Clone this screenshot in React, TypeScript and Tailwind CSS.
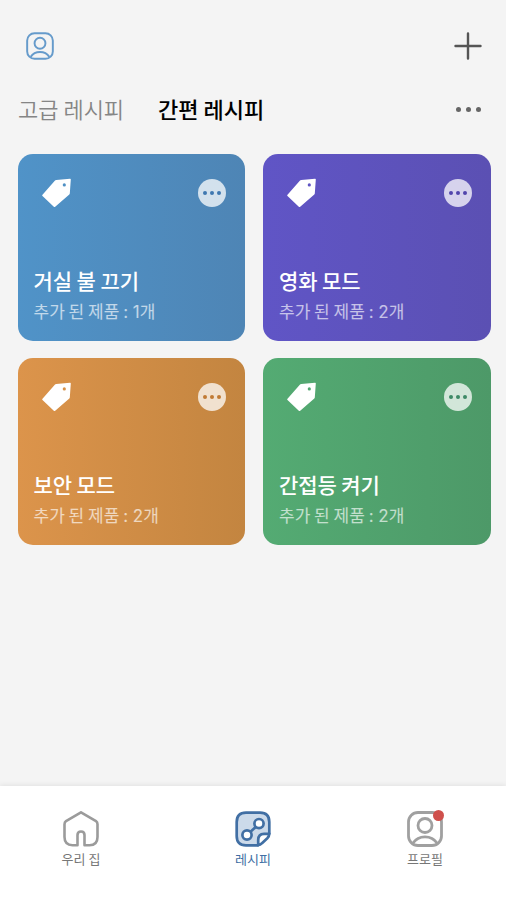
import React from 'react';

interface Recipe {
  title: string;
  count: number;
  gradient: string;
  dots: string;
}

const recipes: Recipe[] = [
  { title: '거실 불 끄기', count: 1, gradient: 'from-[#5093c8] to-[#4e85b5]', dots: 'text-[#3f78b0]' },
  { title: '영화 모드', count: 2, gradient: 'from-[#6055c6] to-[#5b50b3]', dots: 'text-[#5145ac]' },
  { title: '보안 모드', count: 2, gradient: 'from-[#dc944b] to-[#c38540]', dots: 'text-[#c17a34]' },
  { title: '간접등 켜기', count: 2, gradient: 'from-[#54ab73] to-[#4d9968]', dots: 'text-[#3d8a66]' },
];

const ProfileIcon: React.FC<{ className: string; strokeWidth: number }> = ({ className, strokeWidth }) => (
  <svg viewBox="0 0 36 36" fill="none" stroke="currentColor" strokeWidth={strokeWidth} className={className}>
    <rect x="1.5" y="1.5" width="33" height="33" rx="9.5" />
    <circle cx="18" cy="14.5" r="7" />
    <path d="M6 32C9 27.5 13 25.8 18 25.8s9 1.7 12 6.2" />
  </svg>
);

const HomeIcon = () => (
  <svg viewBox="0 0 36 36" fill="none" stroke="currentColor" strokeWidth="2.6" strokeLinejoin="round" className="size-9">
    <path d="M18 1.3 33 10.2Q34.5 11.2 34.5 13.2V26Q34.5 34.2 26.5 34.2H21.5V24Q21.5 20.5 18 20.5T14.5 24V34.2H9.5Q1.5 34.2 1.5 26V13.2Q1.5 11.2 3 10.2Z" />
  </svg>
);

const RecipeIcon = () => (
  <svg viewBox="0 0 36 36" fill="none" stroke="currentColor" strokeWidth="2.7" strokeLinejoin="round" className="size-9">
    <path d="M11 1.7H25Q34.3 1.7 34.3 11V22.5L23 34.3H11Q1.7 34.3 1.7 25V11Q1.7 1.7 11 1.7Z" fill="#ccdaea" />
    <path d="M34.3 22.8H29Q23.2 22.8 23.2 29V34.2Q25.3 34.2 27 32.2L32.3 27.2Q34.3 25.2 34.3 22.8Z" fill="white" />
    <path d="m15.5 20.8 5.5-5" />
    <circle cx="12" cy="24" r="4.6" fill="white" />
    <circle cx="24" cy="12.6" r="4.6" fill="white" />
  </svg>
);

const TagIcon = () => (
  <svg viewBox="0 0 30 30" className="size-[30px] text-white">
    <path
      fill="currentColor"
      fillRule="evenodd"
      d="M14.2 2 28 .8Q28.9.7 28.8 1.6L27.8 15.4Q27.7 16 27.3 16.5L13.2 28.8Q12.4 29.4 11.8 28.7L.5 18Q-.1 17.4.5 16.7L12.8 2.8Q13.4 2.1 14.2 2ZM22.3 5.3a1.6 1.6 0 1 0 0 3.2 1.6 1.6 0 0 0 0-3.2Z"
    />
  </svg>
);

const RecipeCard: React.FC<{ recipe: Recipe }> = ({ recipe }) => (
  <div className={`flex h-[187px] flex-col justify-between rounded-[15px] bg-gradient-to-r pt-6 pr-[19px] pb-4 pl-4 ${recipe.gradient}`}>
    <div className="flex items-start justify-between pl-2">
      <TagIcon />
      <button className={`mt-px flex size-7 items-center justify-center gap-[3px] rounded-full bg-white/75 ${recipe.dots}`}>
        <span className="size-1 rounded-full bg-current" />
        <span className="size-1 rounded-full bg-current" />
        <span className="size-1 rounded-full bg-current" />
      </button>
    </div>
    <div className="whitespace-nowrap">
      <h2 className="text-[21px] leading-[30px] font-medium tracking-[-0.1px] text-white">{recipe.title}</h2>
      <p className="mt-[3px] text-[17px] leading-[26px] text-white/65">
        추가 된 제품 <span className="font-['Inter','Noto_Sans_CJK_KR',sans-serif]">: {recipe.count}</span>개
      </p>
    </div>
  </div>
);

export default function App() {
  return (
    <div className="flex h-[900px] w-[506px] flex-col overflow-hidden bg-[#f4f4f4] font-['Noto_Sans_CJK_KR',sans-serif]">
      <header className="flex items-center justify-between pt-8 pr-6 pl-[25.5px]">
        <ProfileIcon className="size-7 text-[#669bcb]" strokeWidth={2.5} />
        <svg viewBox="0 0 28 28" className="size-7 text-[#555]" stroke="currentColor" strokeWidth="2.4" strokeLinecap="round">
          <path d="M14 1.5v25M1.5 14h25" />
        </svg>
      </header>

      <div className="mt-8 flex h-8 items-center justify-between pr-[25px] pl-[18px] text-[22px] whitespace-nowrap">
        <div className="flex gap-[34px]">
          <span className="font-[350] text-[#858585]">고급 레시피</span>
          <span className="font-medium text-black">간편 레시피</span>
        </div>
        <div className="mt-0.5 flex gap-[5px]">
          <span className="size-[5px] rounded-full bg-[#666]" />
          <span className="size-[5px] rounded-full bg-[#666]" />
          <span className="size-[5px] rounded-full bg-[#666]" />
        </div>
      </div>

      <main className="mt-[29.5px] grid grid-cols-2 gap-x-[18px] gap-y-[17px] pr-[15.5px] pl-[17.5px]">
        {recipes.map((recipe) => (
          <RecipeCard key={recipe.title} recipe={recipe} />
        ))}
      </main>

      {/* Bottom tab bar */}
      <nav className="mt-auto flex h-[114px] justify-between bg-white px-[53px] pt-[25px] text-[13px] leading-4 whitespace-nowrap shadow-[0_-1px_5px_rgba(0,0,0,0.08)]">
        <div className="flex w-14 flex-col items-center gap-1 text-[#9b9b9b]">
          <HomeIcon />
          <span className="text-[#777]">우리 집</span>
        </div>
        <div className="flex w-14 flex-col items-center gap-1 text-[#416fa4]">
          <RecipeIcon />
          <span>레시피</span>
        </div>
        <div className="flex w-14 flex-col items-center gap-1 text-[#a0a0a0]">
          <div className="relative">
            <ProfileIcon className="size-9" strokeWidth={2.8} />
            <span className="absolute -top-px -right-px size-[11px] rounded-full bg-[#cf504c]" />
          </div>
          <span className="text-[#777]">프로필</span>
        </div>
      </nav>
    </div>
  );
}
